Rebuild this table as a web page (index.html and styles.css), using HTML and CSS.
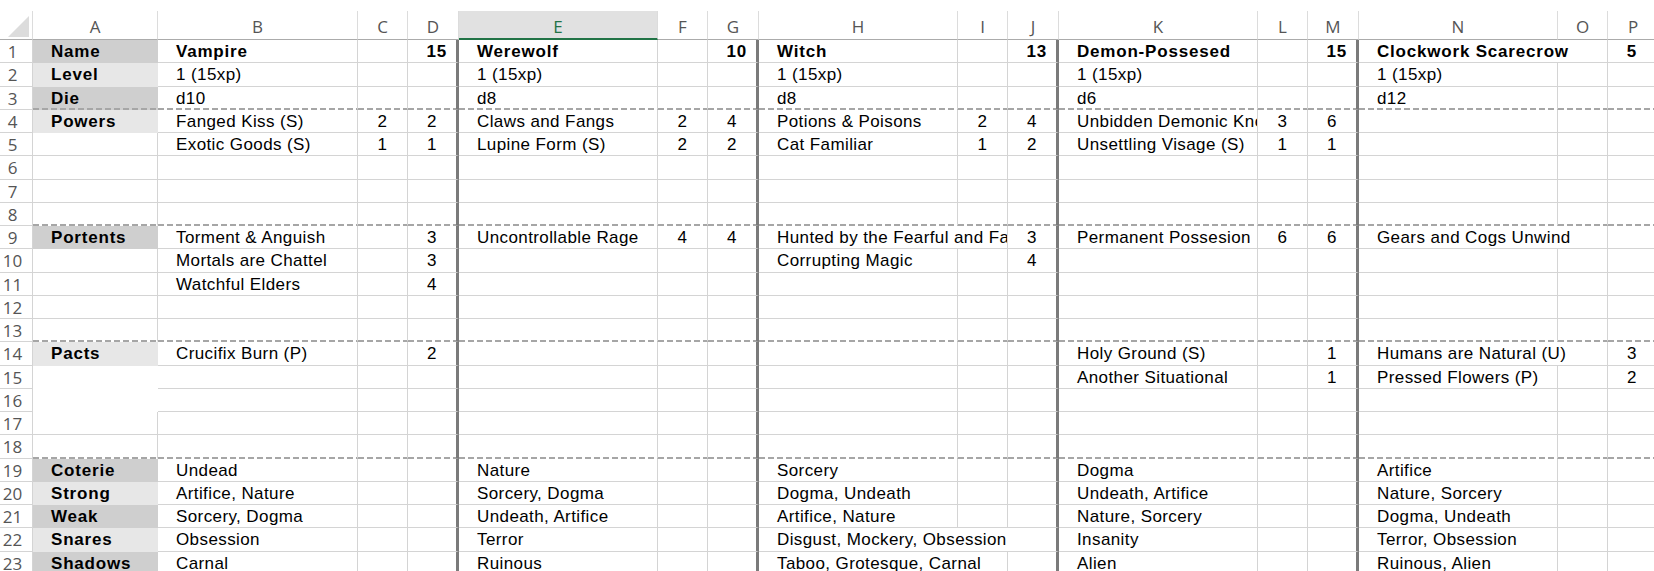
FILE: index.html
```html
<!DOCTYPE html>
<html lang="en">
<head>
<meta charset="utf-8">
<title>Sheet</title>
<link rel="stylesheet" href="styles.css">
</head>
<body>
<div class="sheet">
  <div class="row hdr">
    <div class="corner"><svg width="32" height="28" viewBox="0 0 32 28"><polygon points="8,26 29,5 29,26" fill="#dcdcdc"/></svg></div>
    <div>A</div><div>B</div><div>C</div><div>D</div><div class="sel">E</div><div>F</div><div>G</div><div>H</div><div>I</div><div>J</div><div>K</div><div>L</div><div>M</div><div>N</div><div>O</div><div>P</div>
  </div>

  <div class="row">
    <div class="rh">1</div><div class="b dk">Name</div>
    <div class="b">Vampire</div><div></div><div class="k t">15</div>
    <div class="b">Werewolf</div><div></div><div class="k t">10</div>
    <div class="b">Witch</div><div></div><div class="k t">13</div>
    <div class="b">Demon-Possesed</div><div></div><div class="k t">15</div>
    <div class="b s2">Clockwork Scarecrow</div><div class="k n b">5</div>
  </div>

  <div class="row">
    <div class="rh">2</div><div class="b lt">Level</div>
    <div>1 (15xp)</div><div></div><div class="k"></div>
    <div>1 (15xp)</div><div></div><div class="k"></div>
    <div>1 (15xp)</div><div></div><div class="k"></div>
    <div>1 (15xp)</div><div></div><div class="k"></div>
    <div>1 (15xp)</div><div></div><div class="k"></div>
  </div>

  <div class="row sep">
    <div class="rh">3</div><div class="b dk">Die</div>
    <div>d10</div><div></div><div class="k"></div>
    <div>d8</div><div></div><div class="k"></div>
    <div>d8</div><div></div><div class="k"></div>
    <div>d6</div><div></div><div class="k"></div>
    <div>d12</div><div></div><div class="k"></div>
  </div>

  <div class="row">
    <div class="rh">4</div><div class="b lt">Powers</div>
    <div>Fanged Kiss (S)</div><div class="n">2</div><div class="k n">2</div>
    <div>Claws and Fangs</div><div class="n">2</div><div class="k n">4</div>
    <div>Potions &amp; Poisons</div><div class="n">2</div><div class="k n">4</div>
    <div>Unbidden Demonic Knowledge</div><div class="n">3</div><div class="k n">6</div>
    <div></div><div></div><div class="k"></div>
  </div>

  <div class="row">
    <div class="rh">5</div><div></div>
    <div>Exotic Goods (S)</div><div class="n">1</div><div class="k n">1</div>
    <div>Lupine Form (S)</div><div class="n">2</div><div class="k n">2</div>
    <div>Cat Familiar</div><div class="n">1</div><div class="k n">2</div>
    <div>Unsettling Visage (S)</div><div class="n">1</div><div class="k n">1</div>
    <div></div><div></div><div class="k"></div>
  </div>

  <div class="row">
    <div class="rh">6</div><div></div>
    <div></div><div></div><div class="k"></div>
    <div></div><div></div><div class="k"></div>
    <div></div><div></div><div class="k"></div>
    <div></div><div></div><div class="k"></div>
    <div></div><div></div><div class="k"></div>
  </div>

  <div class="row">
    <div class="rh">7</div><div></div>
    <div></div><div></div><div class="k"></div>
    <div></div><div></div><div class="k"></div>
    <div></div><div></div><div class="k"></div>
    <div></div><div></div><div class="k"></div>
    <div></div><div></div><div class="k"></div>
  </div>

  <div class="row sep">
    <div class="rh">8</div><div></div>
    <div></div><div></div><div class="k"></div>
    <div></div><div></div><div class="k"></div>
    <div></div><div></div><div class="k"></div>
    <div></div><div></div><div class="k"></div>
    <div></div><div></div><div class="k"></div>
  </div>

  <div class="row">
    <div class="rh">9</div><div class="b dk">Portents</div>
    <div>Torment &amp; Anguish</div><div></div><div class="k n">3</div>
    <div>Uncontrollable Rage</div><div class="n">4</div><div class="k n">4</div>
    <div class="s2">Hunted by the Fearful and Faithful</div><div class="k n">3</div>
    <div>Permanent Possesion</div><div class="n">6</div><div class="k n">6</div>
    <div class="s2">Gears and Cogs Unwind</div><div class="k"></div>
  </div>

  <div class="row">
    <div class="rh">10</div><div></div>
    <div>Mortals are Chattel</div><div></div><div class="k n">3</div>
    <div></div><div></div><div class="k"></div>
    <div>Corrupting Magic</div><div></div><div class="k n">4</div>
    <div></div><div></div><div class="k"></div>
    <div></div><div></div><div class="k"></div>
  </div>

  <div class="row">
    <div class="rh">11</div><div></div>
    <div>Watchful Elders</div><div></div><div class="k n">4</div>
    <div></div><div></div><div class="k"></div>
    <div></div><div></div><div class="k"></div>
    <div></div><div></div><div class="k"></div>
    <div></div><div></div><div class="k"></div>
  </div>

  <div class="row">
    <div class="rh">12</div><div></div>
    <div></div><div></div><div class="k"></div>
    <div></div><div></div><div class="k"></div>
    <div></div><div></div><div class="k"></div>
    <div></div><div></div><div class="k"></div>
    <div></div><div></div><div class="k"></div>
  </div>

  <div class="row sep">
    <div class="rh">13</div><div></div>
    <div></div><div></div><div class="k"></div>
    <div></div><div></div><div class="k"></div>
    <div></div><div></div><div class="k"></div>
    <div></div><div></div><div class="k"></div>
    <div></div><div></div><div class="k"></div>
  </div>

  <div class="row">
    <div class="rh">14</div><div class="b lt">Pacts</div>
    <div>Crucifix Burn (P)</div><div></div><div class="k n">2</div>
    <div></div><div></div><div class="k"></div>
    <div></div><div></div><div class="k"></div>
    <div>Holy Ground (S)</div><div></div><div class="k n">1</div>
    <div class="s2">Humans are Natural (U)</div><div class="k n">3</div>
  </div>

  <div class="row">
    <div class="rh">15</div><div class="wf"></div>
    <div></div><div></div><div class="k"></div>
    <div></div><div></div><div class="k"></div>
    <div></div><div></div><div class="k"></div>
    <div>Another Situational</div><div></div><div class="k n">1</div>
    <div>Pressed Flowers (P)</div><div></div><div class="k n">2</div>
  </div>

  <div class="row">
    <div class="rh">16</div><div class="wf"></div>
    <div></div><div></div><div class="k"></div>
    <div></div><div></div><div class="k"></div>
    <div></div><div></div><div class="k"></div>
    <div></div><div></div><div class="k"></div>
    <div></div><div></div><div class="k"></div>
  </div>

  <div class="row">
    <div class="rh">17</div><div></div>
    <div></div><div></div><div class="k"></div>
    <div></div><div></div><div class="k"></div>
    <div></div><div></div><div class="k"></div>
    <div></div><div></div><div class="k"></div>
    <div></div><div></div><div class="k"></div>
  </div>

  <div class="row sep">
    <div class="rh">18</div><div></div>
    <div></div><div></div><div class="k"></div>
    <div></div><div></div><div class="k"></div>
    <div></div><div></div><div class="k"></div>
    <div></div><div></div><div class="k"></div>
    <div></div><div></div><div class="k"></div>
  </div>

  <div class="row">
    <div class="rh">19</div><div class="b dk">Coterie</div>
    <div>Undead</div><div></div><div class="k"></div>
    <div>Nature</div><div></div><div class="k"></div>
    <div>Sorcery</div><div></div><div class="k"></div>
    <div>Dogma</div><div></div><div class="k"></div>
    <div>Artifice</div><div></div><div class="k"></div>
  </div>

  <div class="row">
    <div class="rh">20</div><div class="b lt">Strong</div>
    <div>Artifice, Nature</div><div></div><div class="k"></div>
    <div>Sorcery, Dogma</div><div></div><div class="k"></div>
    <div>Dogma, Undeath</div><div></div><div class="k"></div>
    <div>Undeath, Artifice</div><div></div><div class="k"></div>
    <div>Nature, Sorcery</div><div></div><div class="k"></div>
  </div>

  <div class="row">
    <div class="rh">21</div><div class="b dk">Weak</div>
    <div>Sorcery, Dogma</div><div></div><div class="k"></div>
    <div>Undeath, Artifice</div><div></div><div class="k"></div>
    <div>Artifice, Nature</div><div></div><div class="k"></div>
    <div>Nature, Sorcery</div><div></div><div class="k"></div>
    <div>Dogma, Undeath</div><div></div><div class="k"></div>
  </div>

  <div class="row">
    <div class="rh">22</div><div class="b lt">Snares</div>
    <div>Obsession</div><div></div><div class="k"></div>
    <div>Terror</div><div></div><div class="k"></div>
    <div class="s3 k">Disgust, Mockery, Obsession</div>
    <div>Insanity</div><div></div><div class="k"></div>
    <div>Terror, Obsession</div><div></div><div class="k"></div>
  </div>

  <div class="row">
    <div class="rh">23</div><div class="b dk">Shadows</div>
    <div>Carnal</div><div></div><div class="k"></div>
    <div>Ruinous</div><div></div><div class="k"></div>
    <div class="s2">Taboo, Grotesque, Carnal</div><div class="k"></div>
    <div>Alien</div><div></div><div class="k"></div>
    <div>Ruinous, Alien</div><div></div><div class="k"></div>
  </div>
</div>
</body>
</html>
```

FILE: styles.css
```css
* {
  box-sizing: border-box;
  margin: 0;
  padding: 0;
}

html, body {
  background: #fff;
}

body {
  width: 1654px;
  height: 571px;
  overflow: hidden;
  font-family: "Liberation Sans", Arial, sans-serif;
  font-size: 17px;
  color: #000;
  letter-spacing: 0.4px;
}

.sheet {
  padding-top: 11px;
  width: 1659px;
}

.row {
  display: grid;
  grid-template-columns: 33px 125px 200px 50px 51px 199px 50px 51px 199px 50px 51px 199px 50px 51px 199px 50px 51px;
  height: 23.25px;
}

.row > div {
  border-right: 1px solid #d4d4d4;
  border-bottom: 1px solid #d4d4d4;
  padding-left: 18px;
  line-height: 23px;
  white-space: nowrap;
  overflow: hidden;
}

.row > .rh {
  padding: 0 7px 0 0;
  text-align: center;
  font-family: "Open Sans", "DejaVu Sans", sans-serif;
  font-size: 17px;
  color: #555;
  letter-spacing: 0;
}

/* column header row */
.row.hdr {
  height: 29px;
}

.hdr > div {
  padding: 3px 0 0;
  text-align: center;
  font-family: "Open Sans", "DejaVu Sans", sans-serif;
  color: #555;
  letter-spacing: 0;
  line-height: 25px;
  border-right-color: #dcdcdc;
  border-bottom: 1px solid #ababab;
}

.row.hdr > .corner {
  padding: 0;
}

.corner svg {
  display: block;
}

.row.hdr > .sel {
  background: #e1e1e1;
  color: #217346;
  border-bottom: 2px solid #217346;
}

/* cell kinds */
.b {
  font-weight: bold;
  letter-spacing: 0.8px;
}

.row > .n {
  padding: 0;
  text-align: center;
}

.row > .t {
  padding: 0 9px 0 0;
  text-align: right;
  font-weight: bold;
  letter-spacing: 0.8px;
}

.row > .k {
  border-right: 3px solid #7a7a7a;
}

.s2 {
  grid-column: span 2;
}

.s3 {
  grid-column: span 3;
}

/* label fills */
.row > .dk {
  background-color: #cfcfcf;
  border-color: #cfcfcf;
}

.row > .lt {
  background-color: #e7e7e7;
  border-color: #e7e7e7;
}

.row > .wf {
  background-color: #fff;
  border-color: #fff;
}

/* dashed section separators */
.sep > div:not(.rh) {
  border-bottom-color: transparent;
  background-image: repeating-linear-gradient(90deg, #a6a6a6 0 6px, transparent 6px 9px);
  background-size: 100% 2px;
  background-position: 0 100%;
  background-repeat: no-repeat;
  background-origin: border-box;
}
```
